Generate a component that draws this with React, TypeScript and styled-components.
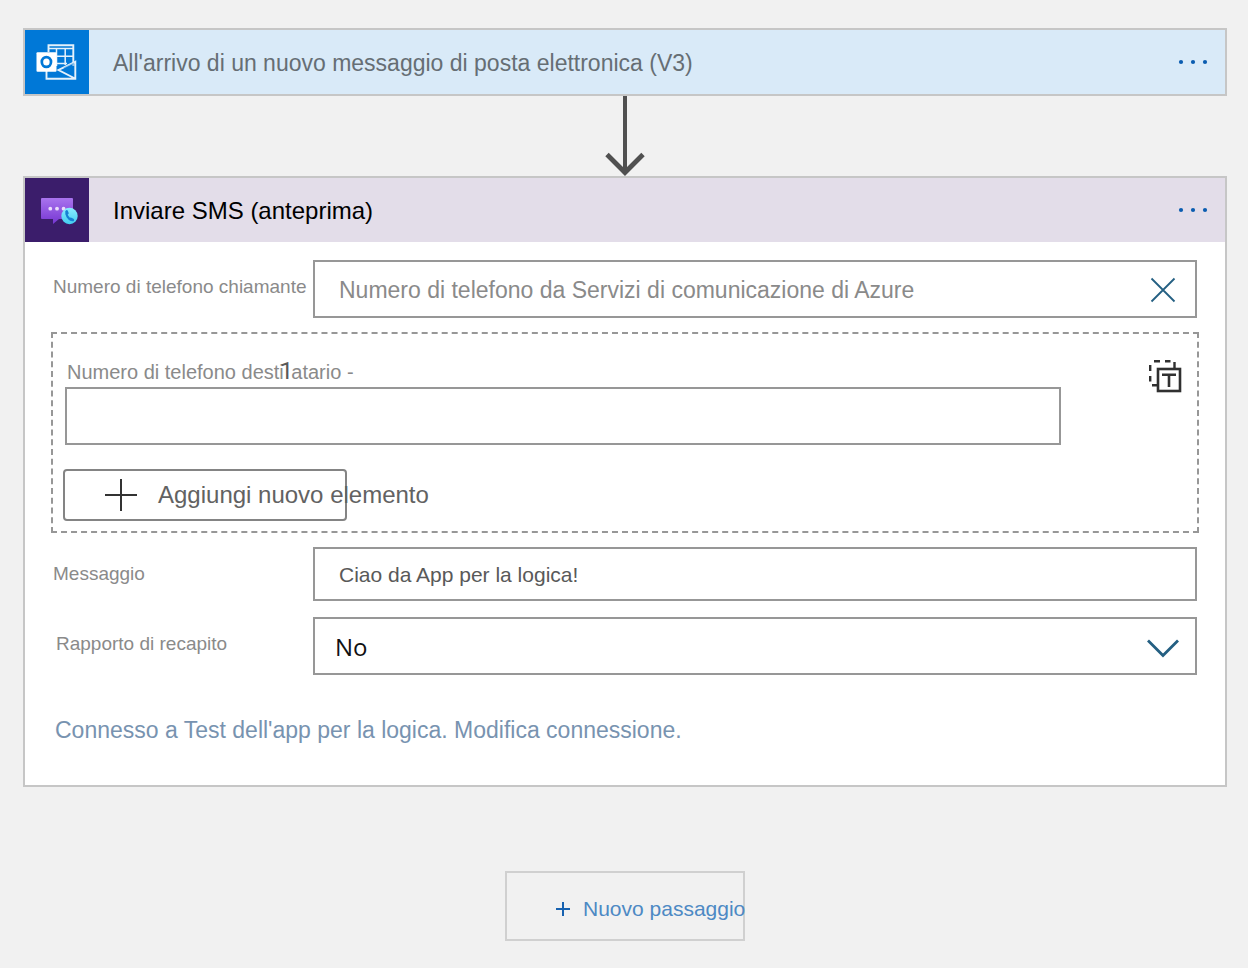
import React from 'react';
import styled, { createGlobalStyle } from 'styled-components';

const GlobalStyle = createGlobalStyle`
  *, *::before, *::after { box-sizing: border-box; }
  body {
    margin: 0;
    background: #f1f1f1;
    font-family: "Liberation Sans", Arial, sans-serif;
  }
  button, input, select { font-family: inherit; margin: 0; }
`;

const Page = styled.main`
  display: flex;
  flex-direction: column;
  padding: 28px 21px 27px 23px;
`;

const Card = styled.section`
  border: 2px solid #c6c6c6;
  background: #fff;
`;

const CardHeader = styled.header<{ $tint: string }>`
  display: flex;
  align-items: center;
  height: 64px;
  background: ${(p) => p.$tint};
`;

const IconTile = styled.div<{ $color: string }>`
  display: flex;
  width: 64px;
  height: 64px;
  background: ${(p) => p.$color};
`;

const CardTitle = styled.h2<{ $color: string; $size: number }>`
  flex: 1;
  margin: 0;
  padding: 2px 0 0 24px;
  font-size: ${(p) => p.$size}px;
  line-height: 28px;
  font-weight: 400;
  white-space: nowrap;
  color: ${(p) => p.$color};
`;

const IconButton = styled.button`
  display: flex;
  padding: 0;
  border: 0;
  background: none;
  cursor: pointer;
`;

const MenuButton = styled(IconButton)`
  margin-right: 16px;
`;

const Connector = styled.div`
  display: flex;
  justify-content: center;
  height: 80px;
`;

const CardBody = styled.form`
  display: flex;
  flex-direction: column;
  padding: 18px 26px 41px;
`;

const FieldRow = styled.div`
  display: flex;
  align-items: flex-start;
  padding: 0 2px;
  & + & { margin-top: 16px; }
`;

const Label = styled.label<{ $inset?: boolean }>`
  flex: 0 0 260px;
  padding: 14px 0 0 ${(p) => (p.$inset ? 3 : 0)}px;
  font-size: 19px;
  line-height: 25px;
  white-space: nowrap;
  color: #8a8a8a;
`;

const Control = styled.div<{ $height: number }>`
  display: flex;
  flex: 1;
  align-items: center;
  height: ${(p) => p.$height}px;
  padding-top: 2px;
  border: 2px solid #979797;
  background: #fff;
`;

const TextInput = styled.input<{ $size: number }>`
  flex: 1;
  min-width: 0;
  height: 100%;
  padding: 0 24px;
  border: 0;
  outline: 0;
  background: transparent;
  font-size: ${(p) => p.$size}px;
  color: #595959;
  &::placeholder { color: #8a8a8a; opacity: 1; }
`;

const ClearButton = styled(IconButton)`
  margin-right: 18px;
`;

const SelectWrap = styled(Control)`
  position: relative;
  padding-top: 0;
`;

const Select = styled.select`
  width: 100%;
  height: 100%;
  padding: 0 60px 0 20px;
  border: 0;
  outline: 0;
  appearance: none;
  background: transparent;
  font-family: "Open Sans", sans-serif;
  font-size: 24px;
  color: #111;
`;

const Chevron = styled.svg`
  position: absolute;
  right: 15px;
  top: 19px;
  pointer-events: none;
`;

const Group = styled.fieldset`
  display: flex;
  justify-content: space-between;
  align-items: flex-start;
  min-width: 0;
  margin: 14px 0;
  padding: 25px 15px 10px 10px;
  border: 2px dashed #979797;
`;

const GroupMain = styled.div`
  flex: 0 1 998px;
  display: flex;
  flex-direction: column;
`;

const ItemLabel = styled.label`
  padding-left: 4px;
  margin-bottom: 2px;
  font-size: 20px;
  line-height: 26px;
  color: #8a8a8a;
`;

const ItemIndex = styled.span`
  margin: 0 -2px 0 -4px;
  font-family: Roboto, sans-serif;
  font-size: 24px;
  line-height: 20px;
  color: #595959;
`;

const ItemControl = styled(Control)`
  flex: none;
  margin: 0 0 24px 2px;
`;

const AddButton = styled.button`
  display: flex;
  align-items: center;
  gap: 20px;
  width: 284px;
  height: 52px;
  padding: 0 0 0 39px;
  border: 2px solid #848484;
  border-radius: 4px;
  background: #fff;
  font-size: 24px;
  line-height: 28px;
  white-space: nowrap;
  color: #626262;
  cursor: pointer;
  svg { flex: none; }
`;

const ConnectionLink = styled.a`
  align-self: flex-start;
  margin-top: 41px;
  padding-left: 4px;
  font-size: 23px;
  line-height: 28px;
  text-decoration: none;
  color: #7893b0;
`;

const NewStepButton = styled.button`
  display: flex;
  align-items: center;
  align-self: center;
  gap: 12px;
  width: 240px;
  height: 70px;
  margin-top: 84px;
  padding: 6px 0 0 48px;
  border: 2px solid #d0d0d0;
  background: transparent;
  font-size: 21px;
  line-height: 24px;
  white-space: nowrap;
  color: #4d89c4;
  cursor: pointer;
  svg { flex: none; }
`;

const Dots = () => (
  <svg width="32" height="16" viewBox="0 0 32 16" fill="#0a5cb0">
    <circle cx="4" cy="8" r="2.1" />
    <circle cx="16" cy="8" r="2.1" />
    <circle cx="28" cy="8" r="2.1" />
  </svg>
);

const OutlookIcon = () => (
  <svg width="64" height="64" viewBox="0 0 64 64" fill="none">
    <g stroke="#e4f1fb" strokeWidth="1.5">
      <path d="M23.5 22V15.2H48.3V36" strokeWidth="1.9" />
      <path d="M23 18.4H48M31.5 18V36M40.2 18V35M31 26.2H48M31 33.6H42" />
      <path d="M21.5 41V48.7H50.3V31.8L33.5 40L50 48.5" strokeWidth="1.9" />
    </g>
    <path d="M38.5 37.5L49 32.5V45Z" fill="#0078d7" opacity="0.4" />
    <rect x="11.5" y="22.3" width="20" height="19.5" rx="1" fill="#fff" />
    <ellipse cx="21.4" cy="32" rx="4.6" ry="4.9" stroke="#0078d7" strokeWidth="2.7" />
  </svg>
);

const SmsIcon = () => (
  <svg width="64" height="64" viewBox="0 0 64 64">
    <defs>
      <linearGradient id="bubble" x1="0" y1="0" x2="0" y2="1">
        <stop offset="0" stopColor="#a974ee" />
        <stop offset="1" stopColor="#7636d2" />
      </linearGradient>
      <linearGradient id="phone" x1="0" y1="0" x2="0" y2="1">
        <stop offset="0" stopColor="#8bedff" />
        <stop offset="1" stopColor="#42cdf0" />
      </linearGradient>
    </defs>
    <path d="M17 20H47Q48 20 48 21V40Q48 41 47 41H34L28 46V41H17Q16 41 16 40V21Q16 20 17 20Z" fill="url(#bubble)" />
    <g fill="#eadcfb">
      <circle cx="25.3" cy="30.7" r="1.9" />
      <circle cx="32" cy="30.7" r="1.9" />
      <circle cx="38.6" cy="30.7" r="1.9" />
    </g>
    <circle cx="44.5" cy="38" r="8.2" fill="url(#phone)" />
    <path d="M41.6 33.5C40.4 36.5 43.5 41.3 46.8 42.3" fill="none" stroke="#1681d4" strokeWidth="2.2" />
    <path d="M41.7 33.4L42.4 35.2M45.8 40.9L47.8 42" stroke="#1681d4" strokeWidth="2.6" strokeLinecap="round" />
  </svg>
);

const ArrowIcon = () => (
  <svg width="40" height="80" viewBox="0 0 40 80" fill="none" stroke="#505050">
    <path d="M20 0V76" strokeWidth="4" />
    <path d="M2 58.5L20 76.5L38 58.5" strokeWidth="4.8" />
  </svg>
);

const CloseIcon = () => (
  <svg width="28" height="28" viewBox="0 0 28 28" stroke="#245f82" strokeWidth="1.8">
    <path d="M2.5 2.5L25.5 25.5M25.5 2.5L2.5 25.5" />
  </svg>
);

const ArrayModeIcon = () => (
  <svg width="34" height="34" viewBox="0 0 34 34" fill="none" stroke="#303030">
    <g strokeWidth="2.4">
      <path d="M6 2.2H12M17 2.2H22.5M26.5 3V9M2.2 6V12M2.2 17V22.5M4 26.2H10" />
    </g>
    <rect x="10" y="10" width="22" height="22" strokeWidth="2.6" />
    <path d="M14 15.8H28M21 16V28" strokeWidth="2.6" />
  </svg>
);

export default function App() {
  return (
    <>
      <GlobalStyle />
      <Page>
        <Card>
          <CardHeader $tint="#d9eaf8">
            <IconTile $color="#0078d7"><OutlookIcon /></IconTile>
            <CardTitle $color="#666e74" $size={23}>All'arrivo di un nuovo messaggio di posta elettronica (V3)</CardTitle>
            <MenuButton type="button" aria-label="Menu"><Dots /></MenuButton>
          </CardHeader>
        </Card>
        <Connector><ArrowIcon /></Connector>
        <Card>
          <CardHeader $tint="#e3dde9">
            <IconTile $color="#3b1d6b"><SmsIcon /></IconTile>
            <CardTitle $color="#000" $size={24}>Inviare SMS (anteprima)</CardTitle>
            <MenuButton type="button" aria-label="Menu"><Dots /></MenuButton>
          </CardHeader>
          <CardBody>
            <FieldRow>
              <Label htmlFor="from">Numero di telefono chiamante</Label>
              <Control $height={58}>
                <TextInput id="from" $size={23} placeholder="Numero di telefono da Servizi di comunicazione di Azure" />
                <ClearButton type="button" aria-label="Cancella"><CloseIcon /></ClearButton>
              </Control>
            </FieldRow>
            <Group>
              <GroupMain>
                <ItemLabel htmlFor="to">
                  Numero di telefono desti<ItemIndex>1</ItemIndex>atario -
                </ItemLabel>
                <ItemControl $height={58}>
                  <TextInput id="to" $size={23} />
                </ItemControl>
                <AddButton type="button">
                  <svg width="34" height="34" viewBox="0 0 34 34" stroke="#333" strokeWidth="2">
                    <path d="M1 17H33M17 1V33" />
                  </svg>
                  Aggiungi nuovo elemento
                </AddButton>
              </GroupMain>
              <IconButton type="button" aria-label="Matrice"><ArrayModeIcon /></IconButton>
            </Group>
            <FieldRow>
              <Label htmlFor="message">Messaggio</Label>
              <Control $height={54}>
                <TextInput id="message" $size={21} defaultValue="Ciao da App per la logica!" />
              </Control>
            </FieldRow>
            <FieldRow>
              <Label htmlFor="report" $inset>Rapporto di recapito</Label>
              <SelectWrap $height={58}>
                <Select id="report" defaultValue="No">
                  <option>No</option>
                </Select>
                <Chevron width="34" height="20" viewBox="0 0 34 20" fill="none" stroke="#245f82" strokeWidth="2.8">
                  <path d="M2 2.5L17 17.5L32 2.5" />
                </Chevron>
              </SelectWrap>
            </FieldRow>
            <ConnectionLink href="#">Connesso a Test dell'app per la logica. Modifica connessione.</ConnectionLink>
          </CardBody>
        </Card>
        <NewStepButton type="button">
          <svg width="16" height="16" viewBox="0 0 16 16" stroke="#1762b0" strokeWidth="2">
            <path d="M1 8H15M8 1V15" />
          </svg>
          Nuovo passaggio
        </NewStepButton>
      </Page>
    </>
  );
}
